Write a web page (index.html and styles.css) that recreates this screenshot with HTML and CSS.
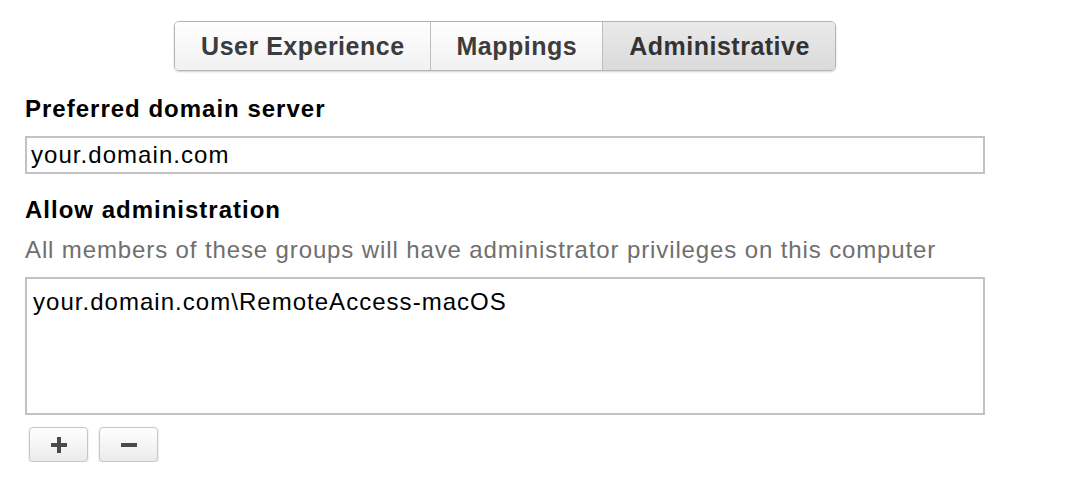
FILE: index.html
```html
<!DOCTYPE html>
<html>
<head>
<meta charset="utf-8">
<link rel="stylesheet" href="styles.css">
</head>
<body>
<div class="page">
  <div class="tabs-row">
    <div class="tabs">
      <div class="tab">User Experience</div>
      <div class="tab">Mappings</div>
      <div class="tab selected">Administrative</div>
    </div>
  </div>
  <div class="label first">Preferred domain server</div>
  <div class="input">your.domain.com</div>
  <div class="label second">Allow administration</div>
  <div class="desc">All members of these groups will have administrator privileges on this computer</div>
  <div class="list">
    <div class="list-item">your.domain.com\RemoteAccess-macOS</div>
  </div>
  <div class="buttons">
    <div class="btn"><svg width="18" height="18" viewBox="0 0 18 18"><path d="M9 1v16M1 9h16" stroke="#4a4a4a" stroke-width="4"/></svg></div>
    <div class="btn"><svg width="18" height="18" viewBox="0 0 18 18"><path d="M1 9h16" stroke="#4a4a4a" stroke-width="4"/></svg></div>
  </div>
</div>
</body>
</html>
```

FILE: styles.css
```css
html, body {
  margin: 0;
  padding: 0;
  background: #ffffff;
}
.page {
  width: 960px;
  padding: 21px 0 0 25px;
  font-family: "Liberation Sans", Arial, sans-serif;
  color: #000;
}
.tabs-row {
  display: flex;
  justify-content: center;
}
.tabs {
  display: flex;
  height: 48px;
  border: 1px solid #b4b4b4;
  border-radius: 5px;
  box-shadow: 0 1px 2px rgba(0,0,0,0.18);
  overflow: hidden;
}
.tab {
  display: flex;
  align-items: center;
  padding: 0 25px 0 26px;
  font-size: 25px;
  letter-spacing: 0.5px;
  font-weight: bold;
  color: #3c3c3c;
  background: linear-gradient(#ffffff, #f1f1f1);
  border-left: 1px solid #bdbdbd;
}
.tab:first-child {
  border-left: none;
}
.tab.selected {
  background: linear-gradient(#eaeaea, #dadada);
  color: #333;
}
.label {
  font-size: 24px;
  letter-spacing: 1px;
  font-weight: bold;
  line-height: 28px;
}
.label.first {
  margin-top: 24px;
}
.label.second {
  margin-top: 22px;
}
.input {
  margin-top: 13px;
  height: 34px;
  border: 2px solid #c2c2c2;
  padding-left: 4px;
  font-size: 24px;
  letter-spacing: 1.05px;
  line-height: 33px;
}
.desc {
  margin-top: 12px;
  font-size: 24px;
  letter-spacing: 0.88px;
  line-height: 28px;
  color: #6f6f6f;
}
.list {
  margin-top: 13px;
  height: 138px;
  box-sizing: border-box;
  border: 2px solid #c2c2c2;
  padding: 9px 6px;
}
.list-item {
  font-size: 24px;
  letter-spacing: 1.03px;
  line-height: 28px;
}
.buttons {
  display: flex;
  gap: 11px;
  margin-top: 12px;
  padding-left: 4px;
}
.btn {
  width: 57px;
  height: 33px;
  border: 1px solid #c6c6c6;
  border-radius: 4px;
  background: linear-gradient(#ffffff, #ebebeb);
  box-shadow: 0 1px 2px rgba(0,0,0,0.18);
  display: flex;
  align-items: center;
  justify-content: center;
}
```
